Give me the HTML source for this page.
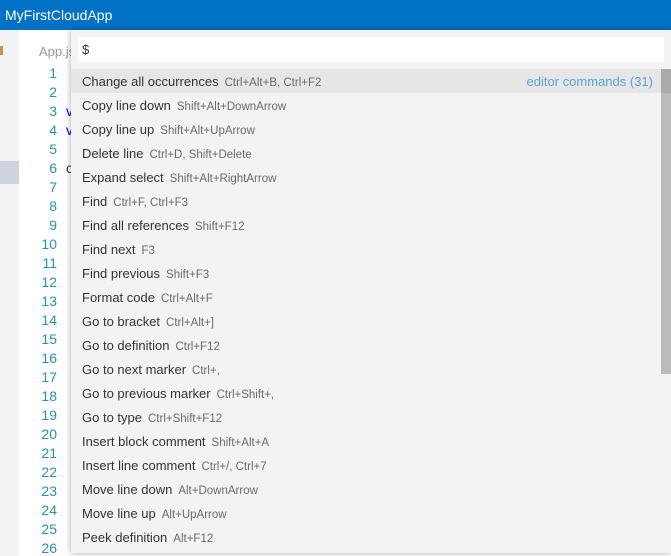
<!DOCTYPE html>
<html><head><style>
*{margin:0;padding:0;box-sizing:border-box}
body{width:671px;height:556px;overflow:hidden;background:#fff;font-family:"Liberation Sans",sans-serif;position:relative}
.hdr{position:absolute;left:0;top:0;width:671px;height:30px;background:#0072c6;color:#fff;font-size:14px;line-height:30px;padding-left:5px}
.side{position:absolute;left:0;top:30px;width:19px;height:526px;background:#f3f3f3}
.sel{position:absolute;left:0;top:161px;width:19px;height:23px;background:#cfd3de}
.ic{position:absolute;left:0;top:16px;width:3px;height:9px;background:#c5944a}
.tab{position:absolute;left:39px;top:44px;font-size:13px;color:#999}
.ln{position:absolute;left:20px;width:37px;text-align:right;font-size:14px;color:#2b91af}
.cd{position:absolute;left:66px;font-size:14px}
.w{position:absolute;left:71px;top:30px;width:600px;height:523px;background:#f3f3f3;box-shadow:0 0 6px rgba(0,0,0,.35)}
.inp{position:absolute;left:7px;top:7px;width:586px;height:25px;background:#fff;font-size:13px;line-height:26px;padding-left:4px;color:#333}
.row{position:absolute;left:0;width:590px;height:24px;line-height:26px;padding-left:11px;font-size:13px;color:#333;white-space:nowrap}
.row span{font-size:11.5px;color:#6a6a6a;margin-left:6px}
.row.a{background:#e6e6e6}
.cat{position:absolute;right:8px;top:0;color:#5aa3d6;font-size:13px}
.sb{position:absolute;left:590px;top:39px;width:10px;height:305px;background:#bbb}
.sb0{position:absolute;left:590px;top:39px;width:10px;height:24px;background:#aaa}
</style></head><body>
<div class="hdr">MyFirstCloudApp</div>
<div class="side"><div class="ic"></div></div>
<div class="sel"></div>
<div class="tab">App.js</div>
<div id="lns"></div>
<div class="cd" style="top:103px;color:#00f">v</div>
<div class="cd" style="top:122px;color:#00f">v</div>
<div class="cd" style="top:160px;color:#333">c</div>
<div class="w">
<div class="inp">$</div>
<div id="rows"></div>
<div class="sb"></div><div class="sb0"></div>
</div>
<script>
var h='';for(var i=1;i<=26;i++){h+='<div class="ln" style="top:'+(65+(i-1)*19)+'px">'+i+'</div>';}
document.getElementById('lns').innerHTML=h;
var c=[["Change all occurrences","Ctrl+Alt+B, Ctrl+F2"],["Copy line down","Shift+Alt+DownArrow"],["Copy line up","Shift+Alt+UpArrow"],["Delete line","Ctrl+D, Shift+Delete"],["Expand select","Shift+Alt+RightArrow"],["Find","Ctrl+F, Ctrl+F3"],["Find all references","Shift+F12"],["Find next","F3"],["Find previous","Shift+F3"],["Format code","Ctrl+Alt+F"],["Go to bracket","Ctrl+Alt+]"],["Go to definition","Ctrl+F12"],["Go to next marker","Ctrl+,"],["Go to previous marker","Ctrl+Shift+,"],["Go to type","Ctrl+Shift+F12"],["Insert block comment","Shift+Alt+A"],["Insert line comment","Ctrl+/, Ctrl+7"],["Move line down","Alt+DownArrow"],["Move line up","Alt+UpArrow"],["Peek definition","Alt+F12"]];
h='';c.forEach(function(r,i){h+='<div class="row'+(i==0?' a':'')+'" style="top:'+(39+i*24)+'px">'+r[0]+'<span>'+r[1]+'</span>'+(i==0?'<div class="cat">editor commands (31)</div>':'')+'</div>';});
document.getElementById('rows').innerHTML=h;
</script>
</body></html>
